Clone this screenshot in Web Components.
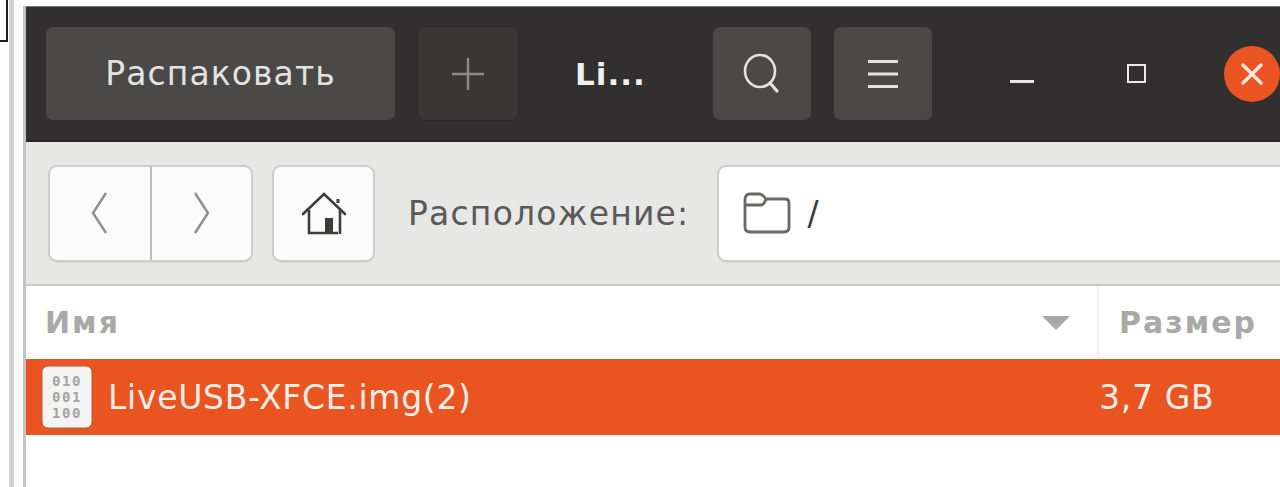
<!DOCTYPE html>
<html>
<head>
<meta charset="utf-8">
<style>
  html, body { margin: 0; height: 100%; background: #fff; overflow: hidden; }
  body { font-family: "DejaVu Sans", "Noto Sans", sans-serif; }
</style>
</head>
<body>
<archive-page></archive-page>
<script>
class HeaderButton extends HTMLElement {
  constructor() {
    super();
    this.attachShadow({ mode: "open" }).innerHTML = `
    <style>
      :host {
        display: flex;
        align-items: center;
        justify-content: center;
        box-sizing: border-box;
        height: 93px;
        border-radius: 7px;
        background: #4a4947;
        color: #e4e3e1;
        font-size: 33px;
        letter-spacing: 1.1px;
      }
      :host([flat]) { background: #383736; box-shadow: 0 0 0 1px #2a2928; color: #8b8a88; }
      svg { display: block; }
    </style>
    <slot></slot>`;
  }
}

class WindowButtons extends HTMLElement {
  constructor() {
    super();
    this.attachShadow({ mode: "open" }).innerHTML = `
    <style>
      :host { display: flex; align-items: center; margin-left: 78px; }
      .min { width: 24px; height: 3px; background: #e6e5e3; margin-top: 15px; }
      .max { width: 19px; height: 19px; box-sizing: border-box; border: 2.5px solid #ecebe9; margin-left: 93px; }
      .close {
        width: 56px; height: 56px; border-radius: 50%; background: #e95420; margin-left: 78px;
        flex: none; display: flex; align-items: center; justify-content: center;
      }
    </style>
    <div class="min"></div>
    <div class="max"></div>
    <div class="close">
      <svg width="24" height="24" viewBox="0 0 24 24"><path d="M3 3L21 21M21 3L3 21" stroke="#f7e8e2" stroke-width="3.4" stroke-linecap="round"/></svg>
    </div>`;
  }
}

class HeaderBar extends HTMLElement {
  constructor() {
    super();
    this.attachShadow({ mode: "open" }).innerHTML = `
    <style>
      :host {
        display: flex;
        align-items: center;
        box-sizing: border-box;
        height: 136px;
        padding: 20px 0 0 20px;
        background: #312f2f;
        border-top: 1px solid #777;
        border-bottom: 2px solid #262525;
        color: #f0efed;
      }
      .title { font-weight: bold; font-size: 31px; letter-spacing: 1px; width: 150px; margin-left: 46px; margin-right: 0; margin-top: -1px; }
      .extract { width: 349px; }
      .add { width: 100px; margin-left: 23px; }
      .tool { width: 99px; }
      .tool + .tool { margin-left: 23px; }
      .center { margin-left: 46px; }
      .title, .extract, .add { flex: none; }
      header-button { margin-top: -20px; }
      .title { margin-top: -20px; margin-left: 57px; width: 138px; }
      window-buttons { margin-top: -20px; }
    </style>
    <header-button class="extract">Распаковать</header-button>
    <header-button class="add" flat>
      <svg width="34" height="34" viewBox="0 0 34 34"><path d="M17 1V33M1 17H33" stroke="#8b8a88" stroke-width="2.4"/></svg>
    </header-button>
    <div class="title">Li...</div>
    <header-button class="tool">
      <svg width="42" height="42" viewBox="0 0 42 42" fill="none" stroke="#e4e3e1"><ellipse cx="19" cy="18" rx="15" ry="16" stroke-width="2.6"/><path d="M29 30L36 38" stroke-width="3.2" stroke-linecap="round"/></svg>
    </header-button>
    <header-button class="tool">
      <svg width="32" height="30" viewBox="0 0 32 30"><path d="M1 2.5H31M1 15H31M1 27.5H31" stroke="#e4e3e1" stroke-width="3"/></svg>
    </header-button>
    <window-buttons></window-buttons>`;
  }
}

class PathBar extends HTMLElement {
  constructor() {
    super();
    this.attachShadow({ mode: "open" }).innerHTML = `
    <style>
      :host {
        display: flex;
        align-items: center;
        box-sizing: border-box;
        height: 144px;
        padding: 0 0 0 22px;
        background: #e7e7e6;
        border-bottom: 2px solid #c9c8c7;
      }
      .box {
        display: flex;
        box-sizing: border-box;
        height: 97px;
        background: #fbfbfb;
        border: 2px solid #cdccca;
        border-radius: 9px;
        box-shadow: 0 1px 1px rgba(0,0,0,.06);
      }
      .nav { width: 205px; }
      .nav div { display: flex; align-items: center; justify-content: center; flex: 1; }
      .nav div + div { border-left: 2px solid #bdbcba; }
      .home { width: 103px; margin-left: 19px; align-items: center; justify-content: center; }
      .label { font-size: 33px; letter-spacing: 1.2px; color: #5a5957; margin-left: 33px; margin-right: 28px; white-space: nowrap; }
      .loc { flex: 1; background: #fff; align-items: center; padding-left: 24px; border-right: 0; border-radius: 9px 0 0 9px; min-width: 0; }
      .slash { font-size: 33px; color: #3d3c3b; margin-left: 16px; }
    </style>
    <div class="box nav">
      <div><svg width="20" height="44" viewBox="0 0 20 44"><path d="M16 2L3 22L16 42" fill="none" stroke="#8e8d8b" stroke-width="2.4"/></svg></div>
      <div><svg width="20" height="44" viewBox="0 0 20 44"><path d="M4 2L17 22L4 42" fill="none" stroke="#8e8d8b" stroke-width="2.4"/></svg></div>
    </div>
    <div class="box home">
      <svg width="46" height="46" viewBox="0 0 46 46" fill="none" stroke="#3d3c3b" stroke-width="2.6">
        <path d="M2 24L23 4L44 24" stroke-linecap="round"/>
        <path d="M8 20V43H37M39 20V44"/>
        <path d="M24 28H32V43H24Z" fill="#3d3c3b" stroke="none"/>
        <path d="M37 9V13" stroke-width="3"/>
      </svg>
    </div>
    <div class="label">Расположение:</div>
    <div class="box loc">
      <svg width="48" height="42" viewBox="0 0 48 42" fill="none" stroke="#6a6967" stroke-width="2.8">
        <path d="M2 8V35Q2 40 7 40H41Q46 40 46 35V11Q46 7 42 7H23Q20 3 17 2H7Q2 2 2 8Z"/>
        <path d="M2 13H18Q21 13 23 7"/>
      </svg>
      <span class="slash">/</span>
    </div>`;
  }
}

class FileList extends HTMLElement {
  constructor() {
    super();
    this.attachShadow({ mode: "open" }).innerHTML = `
    <style>
      :host { display: block; flex: 1; background: #fff; min-height: 0; }
      .head { display: flex; height: 73px; color: #a9a8a6; font-weight: bold; font-size: 30px; letter-spacing: 2px; }
      .col-name { display: flex; align-items: center; justify-content: space-between; box-sizing: border-box; width: 1073px; padding: 0 27px 0 19px; border-right: 2px solid #f0f0ef; }
      .col-size { flex: 1; display: flex; align-items: center; padding-left: 20px; white-space: nowrap; overflow: hidden; }
      .row { display: flex; align-items: center; height: 76px; background: #e95420; color: #fbeee9; font-size: 33px; letter-spacing: .7px; }
      .icon { flex: none; width: 52px; height: 64px; margin-left: 15px; }
      .name { margin-left: 15px; width: 991px; flex: none; }
    </style>
    <div class="head">
      <div class="col-name"><span>Имя</span>
        <svg width="28" height="14" viewBox="0 0 28 14"><path d="M0 0H28L14 14Z" fill="#a9a8a6"/></svg>
      </div>
      <div class="col-size">Размер</div>
    </div>
    <div class="row">
      <svg class="icon" viewBox="0 0 52 64">
        <rect x="1" y="1" width="50" height="62" rx="6" fill="#f4f4f3" stroke="#b8593a" stroke-width="1"/>
        <g font-family="DejaVu Sans Mono, monospace" font-size="14" font-weight="bold" fill="#a5a4a2" text-anchor="middle">
          <text x="26" y="21" letter-spacing="1.5">010</text>
          <text x="26" y="37" letter-spacing="1.5">001</text>
          <text x="26" y="53" letter-spacing="1.5">100</text>
        </g>
      </svg>
      <span class="name">LiveUSB-XFCE.img(2)</span>
      <span>3,7 GB</span>
    </div>`;
  }
}

class ArchiveWindow extends HTMLElement {
  constructor() {
    super();
    this.attachShadow({ mode: "open" }).innerHTML = `
    <style>
      :host { display: flex; flex-direction: column; flex: 1; min-width: 0; overflow: hidden; margin-top: 6px; border-left: 3px solid #c4c3c2; }
      header-bar { border-left: 0; }
    </style>
    <header-bar></header-bar>
    <path-bar></path-bar>
    <file-list></file-list>`;
  }
}

class ArchivePage extends HTMLElement {
  constructor() {
    super();
    this.attachShadow({ mode: "open" }).innerHTML = `
    <style>
      :host { display: flex; height: 487px; width: 1280px; background: #fff; position: relative; overflow: hidden; }
      .corner { position: absolute; left: -4px; top: -4px; width: 8px; height: 42px; border: 2px solid #1c1c1c; background: #fff; }
      .strip { width: 5px; margin-left: 9px; background: #cfcfcf; flex: none; }
      .gap { width: 9px; flex: none; background: #fafafa; }
    </style>
    <div class="corner"></div>
    <div class="strip"></div>
    <div class="gap"></div>
    <archive-window></archive-window>`;
  }
}

// children first so the nested elements are ready when the page upgrades
customElements.define("header-button", HeaderButton);
customElements.define("window-buttons", WindowButtons);
customElements.define("header-bar", HeaderBar);
customElements.define("path-bar", PathBar);
customElements.define("file-list", FileList);
customElements.define("archive-window", ArchiveWindow);
customElements.define("archive-page", ArchivePage);
</script>
</body>
</html>
